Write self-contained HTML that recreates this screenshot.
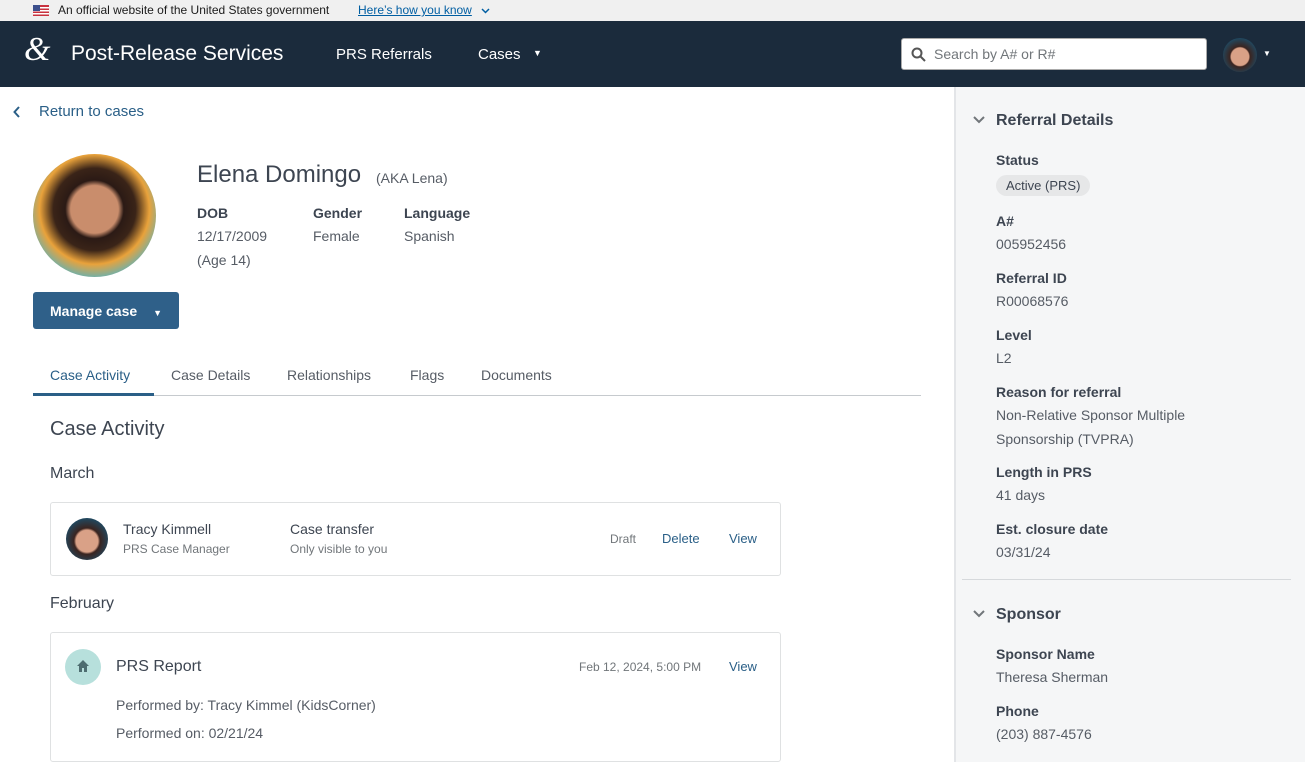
<!DOCTYPE html>
<html><head><meta charset="utf-8"><style>
*{margin:0;padding:0;box-sizing:border-box}
body{width:1305px;height:762px;overflow:hidden;font-family:"Liberation Sans",sans-serif;color:#3d4551;background:#fff;position:relative}
.abs{position:absolute;white-space:nowrap}
.banner{position:absolute;left:0;top:0;width:1305px;height:21px;background:#f0f0f0;font-size:12px;color:#1b1b1b}
.hdr{position:absolute;left:0;top:21px;width:1305px;height:66px;background:#1b2b3c;color:#fff}
.side{position:absolute;left:954px;top:87px;width:351px;height:675px;background:#f5f6f7;border-left:2px solid #e3e5e8}
.lbl{font-size:14px;font-weight:bold;color:#3d4551}
.val{font-size:14px;color:#565c65}
.link{color:#2a5f87}
.card{position:absolute;left:50px;width:731px;border:1px solid #dfe1e2;border-radius:3px;background:#fff}
</style></head><body>
<div class="banner">
 <svg class="abs" style="left:33px;top:5px" width="16" height="11"><rect width="16" height="11" fill="#c8313e"/><rect y="2" width="16" height="1.5" fill="#fff"/><rect y="5" width="16" height="1.5" fill="#fff"/><rect y="8" width="16" height="1.5" fill="#fff"/><rect width="7" height="6" fill="#3c4f8c"/></svg>
 <span class="abs" style="left:58px;top:3px">An official website of the United States government</span>
 <span class="abs" style="left:358px;top:3px;color:#005ea2;text-decoration:underline">Here’s how you know</span>
 <svg class="abs" style="left:481px;top:8px" width="9" height="6"><path d="M1 1l3.5 3.5L8 1" fill="none" stroke="#005ea2" stroke-width="1.5"/></svg>
</div>
<div class="hdr">
 <span class="abs" style="left:24px;top:10px;font-size:34px;font-family:'Liberation Serif',serif;font-style:italic">&amp;</span>
 <span class="abs" style="left:71px;top:21px;font-size:21px">Post-Release Services</span>
 <span class="abs" style="left:336px;top:25px;font-size:15px">PRS Referrals</span>
 <span class="abs" style="left:478px;top:25px;font-size:15px">Cases</span>
 <span class="abs" style="left:533px;top:27px;font-size:9px">▼</span>
 <div class="abs" style="left:901px;top:17px;width:306px;height:32px;background:#fff;border:1px solid #aaa;border-radius:3px">
  <svg class="abs" style="left:9px;top:8px" width="15" height="15"><circle cx="6" cy="6" r="4.5" fill="none" stroke="#555" stroke-width="2"/><line x1="9.5" y1="9.5" x2="14" y2="14" stroke="#555" stroke-width="2"/></svg>
  <span class="abs" style="left:32px;top:7px;font-size:14px;color:#71767a">Search by A# or R#</span>
 </div>
 <div class="abs" style="left:1223px;top:17px;width:34px;height:34px;border-radius:50%;background:radial-gradient(circle at 50% 55%,#d9a187 0 35%,#3a2420 40%,#1f4a63 75%)"></div>
 <span class="abs" style="left:1263px;top:28px;font-size:8px">▼</span>
</div>
<svg class="abs" style="left:13px;top:106px" width="8" height="12"><path d="M6 1L1.5 6 6 11" fill="none" stroke="#2a5f87" stroke-width="2"/></svg>
<span class="abs link" style="left:39px;top:103px;font-size:15px">Return to cases</span>
<div class="abs" style="left:33px;top:154px;width:123px;height:123px;border-radius:50%;background:radial-gradient(circle at 50% 45%,#c98d6c 0 26%,#2b1a15 32%,#3a2418 45%,#e9a23b 60%,#45b5d0 80%)"></div>
<span class="abs" style="left:197px;top:161px;font-size:24px;color:#3d4551">Elena Domingo</span>
<span class="abs" style="left:376px;top:170px;font-size:14px;color:#565c65">(AKA Lena)</span>
<span class="abs lbl" style="left:197px;top:205px">DOB</span>
<span class="abs val" style="left:197px;top:228px">12/17/2009</span>
<span class="abs val" style="left:197px;top:252px">(Age 14)</span>
<span class="abs lbl" style="left:313px;top:205px">Gender</span>
<span class="abs val" style="left:313px;top:228px">Female</span>
<span class="abs lbl" style="left:404px;top:205px">Language</span>
<span class="abs val" style="left:404px;top:228px">Spanish</span>
<div class="abs" style="left:33px;top:292px;width:146px;height:37px;background:#2f6089;border-radius:3px;color:#fff;font-size:14px;font-weight:bold;padding:11px 0 0 17px">Manage case <span style="font-size:9px;margin-left:12px">▼</span></div>
<span class="abs link" style="left:50px;top:367px;font-size:14px">Case Activity</span>
<span class="abs val" style="left:171px;top:367px">Case Details</span>
<span class="abs val" style="left:287px;top:367px">Relationships</span>
<span class="abs val" style="left:410px;top:367px">Flags</span>
<span class="abs val" style="left:481px;top:367px">Documents</span>
<div class="abs" style="left:33px;top:395px;width:888px;height:1px;background:#c6cace"></div>
<div class="abs" style="left:33px;top:393px;width:121px;height:3px;background:#2a5f87"></div>
<span class="abs" style="left:50px;top:418px;font-size:20px">Case Activity</span>
<span class="abs" style="left:50px;top:465px;font-size:16px">March</span>
<div class="card" style="top:502px;height:74px">
 <div class="abs" style="left:15px;top:15px;width:42px;height:42px;border-radius:50%;background:radial-gradient(circle at 50% 55%,#d9a187 0 35%,#3a2420 42%,#1f4a63 75%)"></div>
 <span class="abs" style="left:72px;top:18px;font-size:14px">Tracy Kimmell</span>
 <span class="abs" style="left:72px;top:39px;font-size:12px;color:#71767a">PRS Case Manager</span>
 <span class="abs" style="left:239px;top:18px;font-size:14px">Case transfer</span>
 <span class="abs" style="left:239px;top:39px;font-size:12px;color:#71767a">Only visible to you</span>
 <span class="abs" style="left:559px;top:29px;font-size:12px;color:#71767a">Draft</span>
 <span class="abs link" style="left:611px;top:28px;font-size:13px">Delete</span>
 <span class="abs link" style="left:678px;top:28px;font-size:13px">View</span>
</div>
<span class="abs" style="left:50px;top:595px;font-size:16px">February</span>
<div class="card" style="top:632px;height:130px">
 <div class="abs" style="left:14px;top:16px;width:36px;height:36px;border-radius:50%;background:#b7e0dc"></div>
 <svg class="abs" style="left:25px;top:26px" width="14" height="14"><path d="M7 1L1 7h2v6h3V9h2v4h3V7h2z" fill="#4d6d70"/></svg>
 <span class="abs" style="left:65px;top:25px;font-size:16px">PRS Report</span>
 <span class="abs" style="left:528px;top:27px;font-size:12px;color:#71767a">Feb 12, 2024, 5:00 PM</span>
 <span class="abs link" style="left:678px;top:26px;font-size:13px">View</span>
 <span class="abs" style="left:65px;top:64px;font-size:14px;color:#565c65">Performed by: Tracy Kimmel (KidsCorner)</span>
 <span class="abs" style="left:65px;top:92px;font-size:14px;color:#565c65">Performed on: 02/21/24</span>
</div>
<div class="side">
 <svg class="abs" style="left:17px;top:29px" width="12" height="8"><path d="M1 1l5 5 5-5" fill="none" stroke="#71767a" stroke-width="2"/></svg>
 <span class="abs" style="left:40px;top:25px;font-size:16px;font-weight:bold">Referral Details</span>
 <span class="abs lbl" style="left:40px;top:65px">Status</span>
 <span class="abs" style="left:40px;top:88px;background:#e6e7e8;border-radius:11px;padding:3px 10px;font-size:13px">Active (PRS)</span>
 <span class="abs lbl" style="left:40px;top:126px">A#</span>
 <span class="abs val" style="left:40px;top:149px">005952456</span>
 <span class="abs lbl" style="left:40px;top:183px">Referral ID</span>
 <span class="abs val" style="left:40px;top:206px">R00068576</span>
 <span class="abs lbl" style="left:40px;top:240px">Level</span>
 <span class="abs val" style="left:40px;top:263px">L2</span>
 <span class="abs lbl" style="left:40px;top:297px">Reason for referral</span>
 <span class="abs val" style="left:40px;top:320px">Non-Relative Sponsor Multiple</span>
 <span class="abs val" style="left:40px;top:344px">Sponsorship (TVPRA)</span>
 <span class="abs lbl" style="left:40px;top:377px">Length in PRS</span>
 <span class="abs val" style="left:40px;top:400px">41 days</span>
 <span class="abs lbl" style="left:40px;top:434px">Est. closure date</span>
 <span class="abs val" style="left:40px;top:457px">03/31/24</span>
 <div class="abs" style="left:6px;top:492px;width:329px;height:1px;background:#d6d9dc"></div>
 <svg class="abs" style="left:17px;top:523px" width="12" height="8"><path d="M1 1l5 5 5-5" fill="none" stroke="#71767a" stroke-width="2"/></svg>
 <span class="abs" style="left:40px;top:519px;font-size:16px;font-weight:bold">Sponsor</span>
 <span class="abs lbl" style="left:40px;top:559px">Sponsor Name</span>
 <span class="abs val" style="left:40px;top:582px">Theresa Sherman</span>
 <span class="abs lbl" style="left:40px;top:616px">Phone</span>
 <span class="abs val" style="left:40px;top:639px">(203) 887-4576</span>
</div>
</body></html>
